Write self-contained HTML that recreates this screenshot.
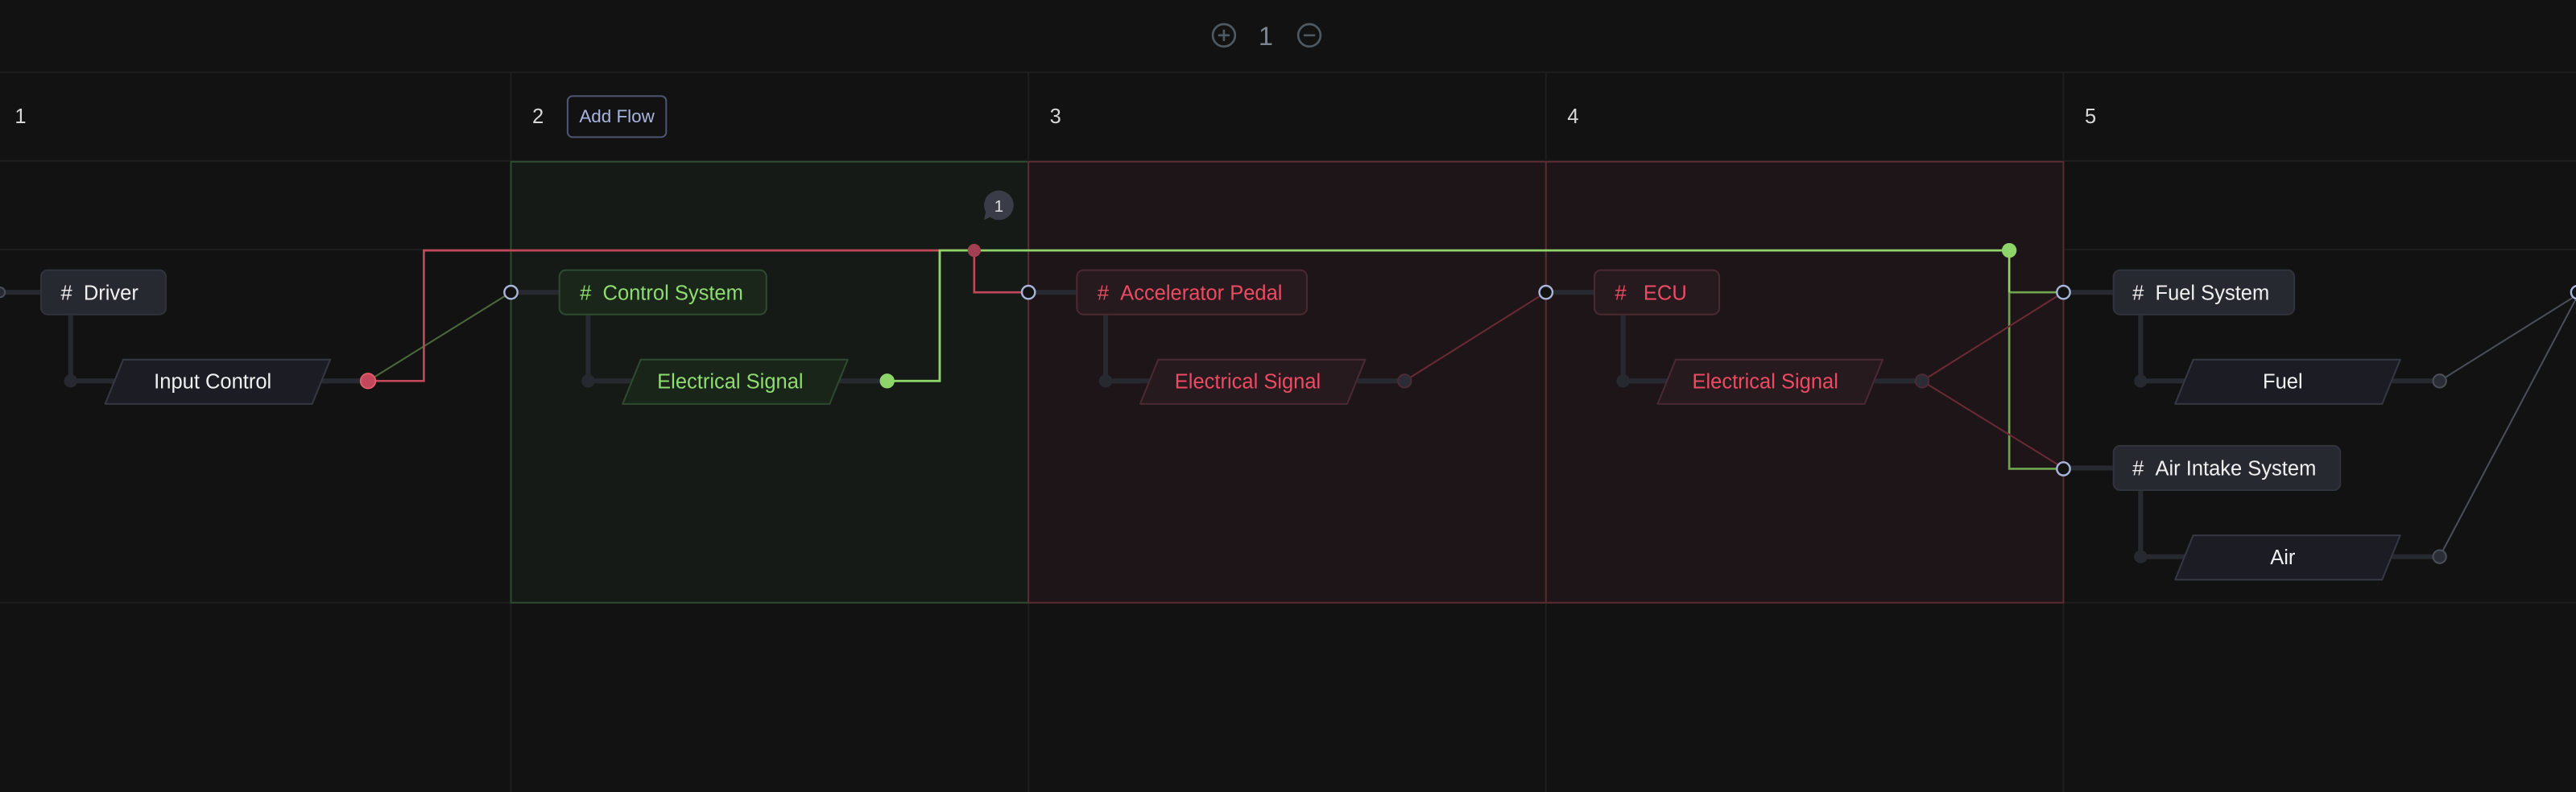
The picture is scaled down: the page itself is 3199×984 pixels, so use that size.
<!DOCTYPE html>
<html><head><meta charset="utf-8"><style>
html,body{margin:0;padding:0;background:#121212;overflow:hidden}
svg{display:block}
text{font-family:"Liberation Sans",sans-serif}
</style></head><body>
<svg width="3199" height="984" viewBox="0 0 1568 482.3" preserveAspectRatio="none" xmlns="http://www.w3.org/2000/svg">
<rect width="1568" height="483" fill="#121212"/>
<!-- grid -->
<g stroke="#1e1e1e" stroke-width="1">
<line x1="0" y1="44" x2="1568" y2="44"/>
<line x1="0" y1="98" x2="1568" y2="98"/>
<line x1="0" y1="152" x2="1568" y2="152"/>
<line x1="0" y1="367" x2="1568" y2="367"/>
<line x1="311" y1="44" x2="311" y2="483"/>
<line x1="626" y1="44" x2="626" y2="483"/>
<line x1="941" y1="44" x2="941" y2="483"/>
<line x1="1256" y1="44" x2="1256" y2="483"/>
</g>
<!-- groups -->
<rect x="311" y="98.5" width="315" height="268.5" fill="#151a16" stroke="#2d4a2e" stroke-width="1"/>
<rect x="626" y="98.5" width="630" height="268.5" fill="#1e1519" stroke="#5a2a32" stroke-width="1"/>
<line x1="941" y1="98.5" x2="941" y2="367" stroke="#5a2a32"/>
<!-- top bar -->
<g stroke="#4e5a63" stroke-width="1.3" fill="none">
<circle cx="745" cy="21.5" r="6.8"/><line x1="741.5" y1="21.5" x2="748.5" y2="21.5"/><line x1="745" y1="18" x2="745" y2="25"/>
<circle cx="797" cy="21.5" r="6.8"/><line x1="793.5" y1="21.5" x2="800.5" y2="21.5"/>
</g>
<text x="770.5" y="27.5" font-size="16" fill="#7a8590" text-anchor="middle">1</text>
<!-- column numbers -->
<g font-size="12.5" fill="#d8d8d8">
<text x="9" y="75">1</text><text x="324" y="75">2</text><text x="639" y="75">3</text><text x="954" y="75">4</text><text x="1269" y="75">5</text>
</g>
<rect x="345.5" y="58.5" width="60" height="25" rx="3" fill="#121212" stroke="#4e5670"/>
<text x="375.5" y="74.5" font-size="11" fill="#a8b4e0" text-anchor="middle">Add Flow</text>
<!-- stems/connectors -->
<g stroke="#262930" stroke-width="3" fill="none">
<line x1="0" y1="178" x2="25" y2="178"/><polyline points="43,192 43,232 70,232"/><line x1="196" y1="232" x2="224" y2="232"/>
<line x1="311" y1="178" x2="340" y2="178"/><polyline points="358,192 358,232 385,232"/><line x1="511" y1="232" x2="540" y2="232"/>
<line x1="626" y1="178" x2="655" y2="178"/><polyline points="673,192 673,232 700,232"/><line x1="826" y1="232" x2="855" y2="232"/>
<line x1="941" y1="178" x2="970" y2="178"/><polyline points="988,192 988,232 1015,232"/><line x1="1141" y1="232" x2="1170" y2="232"/>
<line x1="1256" y1="178" x2="1286" y2="178"/><polyline points="1303,192 1303,232 1330,232"/><line x1="1456" y1="232" x2="1485" y2="232"/>
<line x1="1256" y1="285" x2="1286" y2="285"/><polyline points="1303,299 1303,339 1330,339"/><line x1="1456" y1="339" x2="1485" y2="339"/>
</g>
<g fill="#262930"><circle cx="43" cy="232" r="4"/><circle cx="358" cy="232" r="4"/><circle cx="673" cy="232" r="4"/><circle cx="988" cy="232" r="4"/><circle cx="1303" cy="232" r="4"/><circle cx="1303" cy="339" r="4"/></g>
<!-- edges -->
<line x1="224" y1="232" x2="311" y2="178" stroke="#4a6a3a" stroke-width="1"/>
<polyline points="224,232 258,232 258,152.5 593,152.5 593,178 626,178" fill="none" stroke="#c0485a" stroke-width="1.3"/>
<polyline points="540,232 572,232 572,152.5 1223,152.5" fill="none" stroke="#8fd46a" stroke-width="1.4"/>
<polyline points="1256,178 1223,178 1223,285.5 1256,285.5" fill="none" stroke="#6fa552" stroke-width="1.3"/>
<line x1="1223" y1="152" x2="1223" y2="178" stroke="#8fd46a" stroke-width="1.3"/>
<g stroke="#6a2a34" stroke-width="1"><line x1="855" y1="232" x2="941" y2="178"/><line x1="1170" y1="232" x2="1256" y2="178"/><line x1="1170" y1="232" x2="1256" y2="285"/></g>
<g stroke="#4a4e58" stroke-width="1"><line x1="1485" y1="232" x2="1568" y2="180"/><line x1="1485" y1="339" x2="1568" y2="182"/></g>
<!-- dots -->
<circle cx="0" cy="178" r="3" fill="#262930" stroke="#4a4e58"/>
<circle cx="224" cy="232" r="4.5" fill="#c0485a" stroke="#e05a6a"/>
<circle cx="540" cy="232" r="4.5" fill="#8fd46a"/>
<circle cx="593" cy="152.5" r="4" fill="#a04050"/>
<circle cx="1223" cy="152.5" r="4.5" fill="#8fd46a"/>
<g fill="#121212" stroke="#a8b4d8" stroke-width="1.2"><circle cx="311" cy="178" r="4"/><circle cx="626" cy="178" r="4"/><circle cx="941" cy="178" r="4"/><circle cx="1256" cy="178" r="4"/><circle cx="1256" cy="285.5" r="4"/><circle cx="1569" cy="178" r="4"/></g>
<g fill="#2a2d35" stroke="#4a2a34" stroke-width="1"><circle cx="855" cy="232" r="4"/><circle cx="1170" cy="232" r="4"/></g>
<g fill="#2a2d35" stroke="#4a4e58" stroke-width="1"><circle cx="1485" cy="232" r="4"/><circle cx="1485" cy="339" r="4"/></g>
<!-- comment bubble -->
<circle cx="608" cy="125" r="9" fill="#3a3d48"/><path d="M600,129 L599,134 L605,131 Z" fill="#3a3d48"/>
<text x="608" y="129" font-size="10" fill="#e0e0e0" text-anchor="middle">1</text>
<!-- nodes -->
<g font-size="12.5">
<rect x="25" y="164.5" width="76" height="27" rx="4" fill="#262930" stroke="#30333c"/>
<text x="37" y="182.5" fill="#f0f0f0">#&#160;&#160;Driver</text>
<path d="M75,219 L201,219 L190,246 L64,246 Z" fill="#1c1d24" stroke="#353843" stroke-linejoin="round"/>
<text x="129.5" y="236.5" fill="#f0f0f0" text-anchor="middle">Input Control</text>

<rect x="340.5" y="164.5" width="126" height="27" rx="4" fill="#1a261a" stroke="#2e4a30"/>
<text x="353" y="182.5" fill="#8fdc6f">#&#160;&#160;Control System</text>
<path d="M390,219 L516,219 L505,246 L379,246 Z" fill="#192519" stroke="#2e4a30" stroke-linejoin="round"/>
<text x="444.5" y="236.5" fill="#8fdc6f" text-anchor="middle">Electrical Signal</text>

<rect x="655.5" y="164.5" width="140" height="27" rx="4" fill="#261a1e" stroke="#4a2a32"/>
<text x="668" y="182.5" fill="#ee4a62">#&#160;&#160;Accelerator Pedal</text>
<path d="M705,219 L831,219 L820,246 L694,246 Z" fill="#261a1e" stroke="#4a2a32" stroke-linejoin="round"/>
<text x="759.5" y="236.5" fill="#ee4a62" text-anchor="middle">Electrical Signal</text>

<rect x="970.5" y="164.5" width="76" height="27" rx="4" fill="#261a1e" stroke="#4a2a32"/>
<text x="983" y="182.5" fill="#ee4a62">#&#160;&#160;&#160;ECU</text>
<path d="M1020,219 L1146,219 L1135,246 L1009,246 Z" fill="#261a1e" stroke="#4a2a32" stroke-linejoin="round"/>
<text x="1074.5" y="236.5" fill="#ee4a62" text-anchor="middle">Electrical Signal</text>

<rect x="1286.5" y="164.5" width="110" height="27" rx="4" fill="#262930" stroke="#30333c"/>
<text x="1298" y="182.5" fill="#f0f0f0">#&#160;&#160;Fuel System</text>
<path d="M1335,219 L1461,219 L1450,246 L1324,246 Z" fill="#1c1d24" stroke="#353843" stroke-linejoin="round"/>
<text x="1389.5" y="236.5" fill="#f0f0f0" text-anchor="middle">Fuel</text>

<rect x="1286.5" y="271.5" width="138" height="27" rx="4" fill="#262930" stroke="#30333c"/>
<text x="1298" y="289.5" fill="#f0f0f0">#&#160;&#160;Air Intake System</text>
<path d="M1335,326 L1461,326 L1450,353 L1324,353 Z" fill="#1c1d24" stroke="#353843" stroke-linejoin="round"/>
<text x="1389.5" y="343.5" fill="#f0f0f0" text-anchor="middle">Air</text>
</g>
</svg>
</body></html>
